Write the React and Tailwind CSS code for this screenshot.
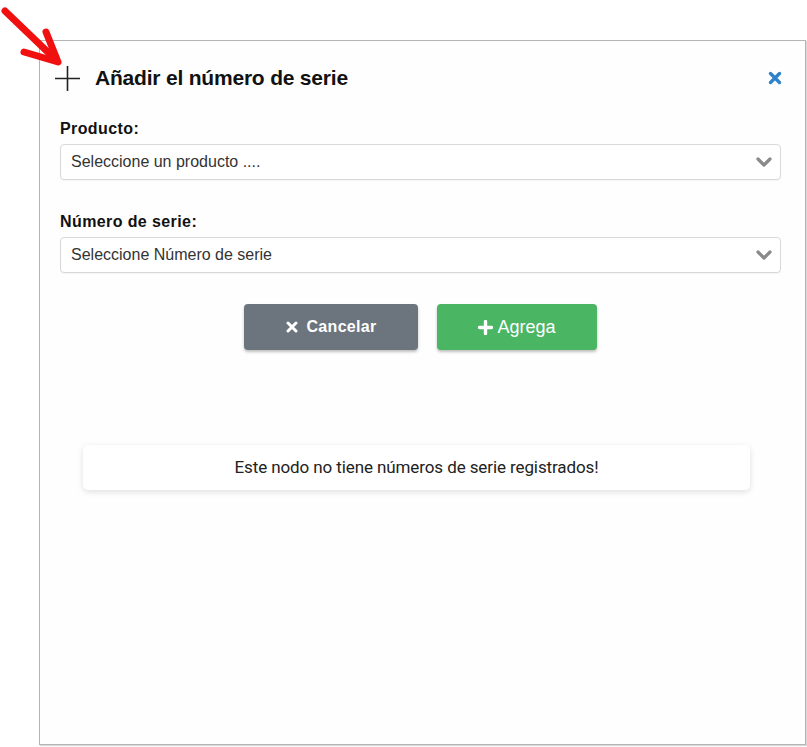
import { useState } from 'react';

function Chevron() {
  return (
    <svg width="16" height="12" viewBox="0 0 16 12" className="shrink-0">
      <path d="M2 3 L8 9 L14 3" fill="none" stroke="#8a8a8a" strokeWidth="3.2" strokeLinecap="round" strokeLinejoin="round" />
    </svg>
  );
}

function SelectBox({ placeholder }) {
  return (
    <div className="flex items-center justify-between h-[36px] rounded-[4px] border border-[#d9d9d9] bg-white pl-[10px] pr-[8px] shadow-[0_1px_1px_rgba(0,0,0,0.04)]">
      <span className="text-[16px] text-[#333]" style={{ fontFamily: '"Liberation Sans", Arial, sans-serif' }}>{placeholder}</span>
      <Chevron />
    </div>
  );
}

export default function App() {
  const [producto] = useState('');
  const font = { fontFamily: '"Liberation Sans", Arial, sans-serif' };

  return (
    <div className="relative w-full h-[747px] bg-white pt-[40px] pl-[39px]" style={font}>
      {/* flecha roja */}
      <svg className="absolute left-0 top-0" width="70" height="70" viewBox="0 0 70 70">
        <path d="M5 11 L54 58" stroke="#f01010" strokeWidth="7" strokeLinecap="round" fill="none" />
        <path d="M46 32 L58 62 L24 52" stroke="#f01010" strokeWidth="7" strokeLinecap="round" strokeLinejoin="round" fill="none" />
      </svg>

      <div className="w-[767px] h-[705px] border border-[#b4b4b4] bg-[#fefefe] shadow-[1px_1px_1px_rgba(0,0,0,0.15)]">
        {/* cabecera */}
        <div className="flex items-center justify-between h-[28px] mt-[23px] pl-[14px] pr-[23px]">
          <div className="flex items-center gap-[14px]">
            <svg width="27" height="27" viewBox="0 0 27 27">
              <path d="M13.5 1 V26 M1 13.5 H26" stroke="#222" strokeWidth="1.6" />
            </svg>
            <h1 className="text-[21px] font-bold text-[#111] tracking-[-0.2px]">Añadir el número de serie</h1>
          </div>
          <svg width="14" height="14" viewBox="0 0 14 14">
            <path d="M2.5 2.5 L11.5 11.5 M11.5 2.5 L2.5 11.5" stroke="#2e82cc" strokeWidth="3.4" strokeLinecap="round" />
          </svg>
        </div>

        {/* formulario */}
        <div className="pl-[20px] pr-[24px] mt-[27px]">
          <label className="block text-[16px] leading-[20px] font-bold text-[#111] tracking-[0.4px]">Producto:</label>
          <div className="mt-[5px]">
            <SelectBox placeholder={producto || 'Seleccione un producto ....'} />
          </div>

          <label className="block mt-[32px] text-[16px] leading-[20px] font-bold text-[#111] tracking-[0.4px]">Número de serie:</label>
          <div className="mt-[5px]">
            <SelectBox placeholder="Seleccione Número de serie" />
          </div>

          <div className="flex justify-center gap-[19px] mt-[31px]">
            <button className="flex items-center justify-center gap-[9px] w-[174px] h-[46px] rounded-[4px] bg-[#6c757d] text-white text-[16px] font-bold tracking-[0.3px] shadow-[0_2px_3px_rgba(0,0,0,0.25)]">
              <svg width="12" height="12" viewBox="0 0 12 12">
                <path d="M2 2 L10 10 M10 2 L2 10" stroke="#fff" strokeWidth="3" strokeLinecap="round" />
              </svg>
              Cancelar
            </button>
            <button className="flex items-center justify-center gap-[4px] w-[160px] h-[46px] rounded-[4px] bg-[#4ab563] text-white text-[18px] shadow-[0_2px_3px_rgba(0,0,0,0.25)]">
              <svg width="15" height="15" viewBox="0 0 15 15">
                <path d="M7.5 1.5 V13.5 M1.5 7.5 H13.5" stroke="#fff" strokeWidth="3.4" strokeLinecap="round" />
              </svg>
              Agrega
            </button>
          </div>
        </div>

        {/* mensaje */}
        <div className="ml-[43px] w-[667px] mt-[95px] h-[45px] flex items-center justify-center rounded-[5px] bg-white shadow-[0_2px_6px_rgba(0,0,0,0.12)]">
          <p className="text-[17px] text-[#222] tracking-[-0.1px]" style={{ fontFamily: 'Roboto, sans-serif' }}>
            Este nodo no tiene números de serie registrados!
          </p>
        </div>
      </div>
    </div>
  );
}
